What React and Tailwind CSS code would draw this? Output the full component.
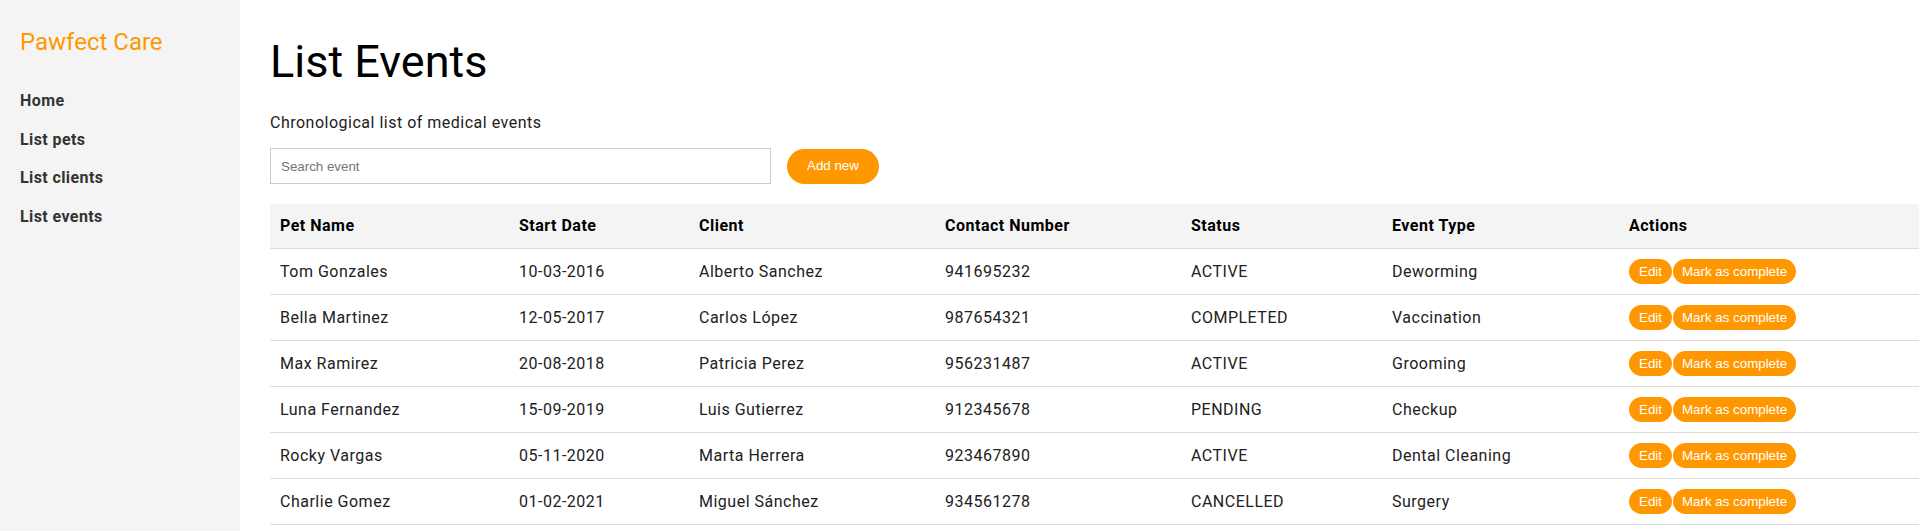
import React from "react";

const rows = [
  ["Tom Gonzales", "10-03-2016", "Alberto Sanchez", "941695232", "ACTIVE", "Deworming"],
  ["Bella Martinez", "12-05-2017", "Carlos López", "987654321", "COMPLETED", "Vaccination"],
  ["Max Ramirez", "20-08-2018", "Patricia Perez", "956231487", "ACTIVE", "Grooming"],
  ["Luna Fernandez", "15-09-2019", "Luis Gutierrez", "912345678", "PENDING", "Checkup"],
  ["Rocky Vargas", "05-11-2020", "Marta Herrera", "923467890", "ACTIVE", "Dental Cleaning"],
  ["Charlie Gomez", "01-02-2021", "Miguel Sánchez", "934561278", "CANCELLED", "Surgery"],
];

const headers = ["Pet Name", "Start Date", "Client", "Contact Number", "Status", "Event Type", "Actions"];

export default function App() {
  return (
    <div className="flex min-h-[531px] w-full bg-white font-['Roboto',sans-serif] text-[#212121]">
      <aside className="w-[240px] shrink-0 bg-[#f4f4f4] px-[20px] pt-[28px]">
        <div className="text-[24px] leading-[28px] text-[#ff9800]">Pawfect Care</div>
        <nav className="mt-[36px] flex flex-col gap-[20px]">
          {["Home", "List pets", "List clients", "List events"].map((t) => (
            <a key={t} className="text-[16px] font-bold leading-[18.5px] tracking-[0.4px] text-[#333]">
              {t}
            </a>
          ))}
        </nav>
      </aside>
      <main className="min-w-0 flex-1 pl-[30px] pt-[35px]">
        <h1 className="text-[45px] font-normal leading-[53px] text-black">List Events</h1>
        <p className="mt-[25px] text-[16px] leading-[19px] tracking-[0.5px] text-[#212121]">Chronological list of medical events</p>
        <div className="mt-[16px] flex items-center gap-[16px]">
          <input
            placeholder="Search event"
            className="h-[36px] w-[501px] border border-[#cccccc] bg-white pl-[10px] font-['Liberation_Sans',Arial,sans-serif] text-[13.333px] text-[#333] outline-none placeholder:text-[#757575]"
          />
          <button className="h-[35px] rounded-full bg-[#ff9800] px-[20px] font-['Liberation_Sans',Arial,sans-serif] text-[13.333px] text-white">
            Add new
          </button>
        </div>
        <table className="mt-[20px] w-full table-fixed border-collapse text-left">
          <colgroup>
            <col className="w-[239px]" />
            <col className="w-[180px]" />
            <col className="w-[246px]" />
            <col className="w-[246px]" />
            <col className="w-[201px]" />
            <col className="w-[237px]" />
            <col />
          </colgroup>
          <thead>
            <tr className="border-b border-[#dddddd] bg-[#f4f4f4]">
              {headers.map((h) => (
                <th key={h} className="px-[10px] py-[13px] text-[16px] font-bold leading-[17.5px] tracking-[0.5px] text-black">
                  {h}
                </th>
              ))}
            </tr>
          </thead>
          <tbody>
            {rows.map((r) => (
              <tr key={r[0]} className="border-b border-[#dddddd]">
                {r.map((c, i) => (
                  <td key={i} className="px-[10px] py-[13px] text-[16px] leading-[19px] tracking-[0.5px] text-[#212121]">
                    {c}
                  </td>
                ))}
                <td className="px-[10px] py-0">
                  <div className="flex items-center gap-[1px]">
                    <button className="h-[25px] rounded-full bg-[#ff9800] px-[10px] font-['Liberation_Sans',Arial,sans-serif] text-[13.333px] leading-[15px] text-white">
                      Edit
                    </button>
                    <button className="h-[25px] rounded-full bg-[#ff9800] px-[9px] font-['Liberation_Sans',Arial,sans-serif] text-[13.333px] leading-[15px] text-white">
                      Mark as complete
                    </button>
                  </div>
                </td>
              </tr>
            ))}
          </tbody>
        </table>
      </main>
    </div>
  );
}
